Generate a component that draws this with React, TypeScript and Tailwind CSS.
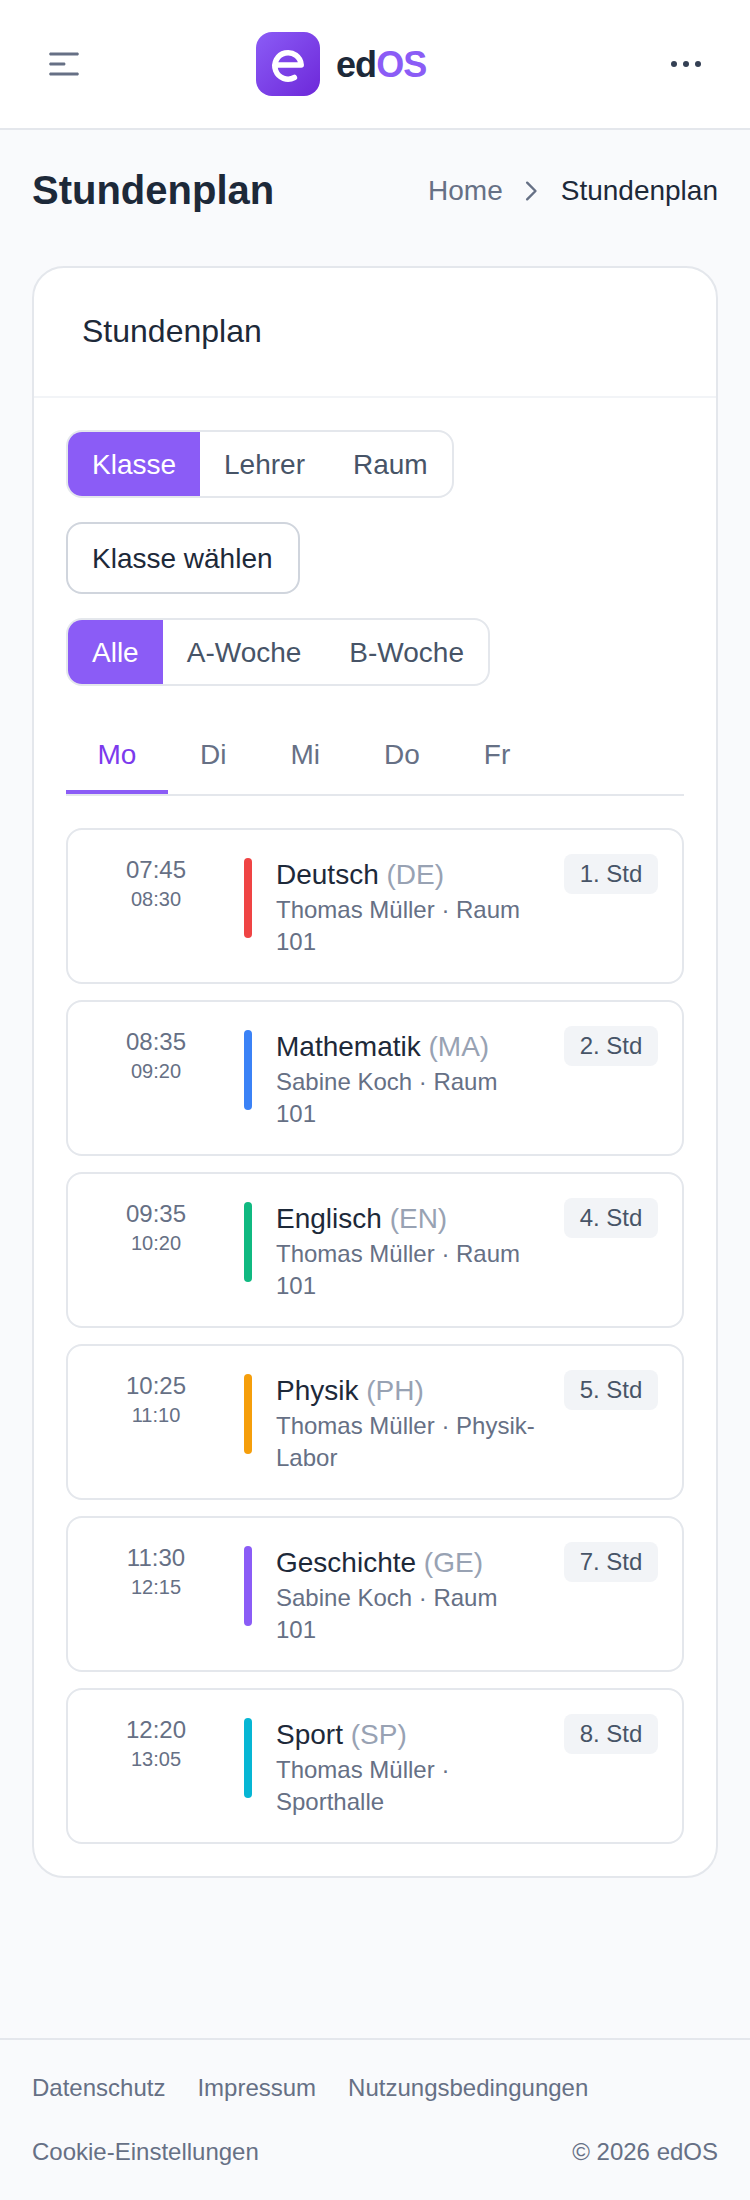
const lessons = [
  { start: "07:45", end: "08:30", bar: "bg-[#ef4444]", subject: "Deutsch", code: "DE", info: "Thomas Müller · Raum 101", period: 1 },
  { start: "08:35", end: "09:20", bar: "bg-[#3b82f6]", subject: "Mathematik", code: "MA", info: "Sabine Koch · Raum 101", period: 2 },
  { start: "09:35", end: "10:20", bar: "bg-[#10b981]", subject: "Englisch", code: "EN", info: "Thomas Müller · Raum 101", period: 4 },
  { start: "10:25", end: "11:10", bar: "bg-[#f59e0b]", subject: "Physik", code: "PH", info: "Thomas Müller · Physik-Labor", period: 5 },
  { start: "11:30", end: "12:15", bar: "bg-[#8b5cf6]", subject: "Geschichte", code: "GE", info: "Sabine Koch · Raum 101", period: 7 },
  { start: "12:20", end: "13:05", bar: "bg-[#06b6d4]", subject: "Sport", code: "SP", info: "Thomas Müller · Sporthalle", period: 8 },
];

function Segmented({ options }: { options: string[] }) {
  return (
    <div className="flex h-[68px] w-fit overflow-hidden rounded-2xl border-2 border-[#e4e7ec]">
      {options.map((option, i) => (
        <button
          key={option}
          className={
            i === 0
              ? "bg-[#8b5cf6] px-6 pt-px text-[28px] leading-[39px] text-white"
              : "px-6 pt-px text-[28px] leading-[39px] text-[#475467]"
          }
        >
          {option}
        </button>
      ))}
    </div>
  );
}

function Header() {
  return (
    <header className="flex h-[130px] items-center justify-between border-b-2 border-[#e4e7ec] bg-white px-6">
      <button className="flex size-20 items-center justify-center" aria-label="Menü">
        <svg width="32" height="24" viewBox="0 0 16 12" fill="none">
          <path
            fillRule="evenodd"
            clipRule="evenodd"
            d="M0.583252 1C0.583252 0.585788 0.919038 0.25 1.33325 0.25H14.6666C15.0808 0.25 15.4166 0.585786 15.4166 1C15.4166 1.41421 15.0808 1.75 14.6666 1.75L1.33325 1.75C0.919038 1.75 0.583252 1.41422 0.583252 1ZM0.583252 11C0.583252 10.5858 0.919038 10.25 1.33325 10.25L14.6666 10.25C15.0808 10.25 15.4166 10.5858 15.4166 11C15.4166 11.4142 15.0808 11.75 14.6666 11.75L1.33325 11.75C0.919038 11.75 0.583252 11.4142 0.583252 11ZM1.33325 5.25C0.919038 5.25 0.583252 5.58579 0.583252 6C0.583252 6.41421 0.919038 6.75 1.33325 6.75L7.99992 6.75C8.41413 6.75 8.74992 6.41421 8.74992 6C8.74992 5.58579 8.41413 5.25 7.99992 5.25L1.33325 5.25Z"
            fill="#667085"
          />
        </svg>
      </button>
      <div className="flex w-[238px] items-center gap-4">
        <svg className="shrink-0" width="64" height="64" viewBox="0 0 64 64" fill="none">
          <defs>
            <linearGradient id="logo" x1="0" y1="0" x2="64" y2="64" gradientUnits="userSpaceOnUse">
              <stop stopColor="#8b5cf6" />
              <stop offset="1" stopColor="#6d28d9" />
            </linearGradient>
          </defs>
          <rect width="64" height="64" rx="16" fill="url(#logo)" />
          <path
            d="M19 32.9H45.2A13.2 13.2 0 1 0 38.4 45.5"
            stroke="#fff"
            strokeWidth="5.5"
            strokeLinecap="round"
            strokeLinejoin="round"
          />
        </svg>
        <span className="pt-0.5 text-[36px] leading-[56px] font-bold tracking-[-0.025em] text-[#1d2939]">
          ed<span className="text-[#8b5cf6]">OS</span>
        </span>
      </div>
      <button className="flex size-20 items-center justify-center" aria-label="Mehr">
        <svg width="48" height="48" viewBox="0 0 24 24" fill="#344054">
          <circle cx="6" cy="12" r="1.5" />
          <circle cx="12" cy="12" r="1.5" />
          <circle cx="18" cy="12" r="1.5" />
        </svg>
      </button>
    </header>
  );
}

export default function App() {
  return (
    <div className="flex h-[2200px] w-[750px] flex-col bg-[#f9fafc] font-['Liberation_Sans',Arial,sans-serif]">
      <Header />
      <main className="flex-1 px-8 pt-8">
        <div className="mb-12 flex h-14 items-center justify-between">
          <h1 className="text-[40px] leading-[56px] font-bold text-[#1d2939]">Stundenplan</h1>
          <nav className="flex items-center gap-3 text-[28px] leading-[39px]">
            <a className="flex items-center gap-3 text-[#667085]">
              <span className="pt-px">Home</span>
              <svg width="34" height="32" viewBox="0 0 17 16" fill="none" stroke="#667085" strokeWidth="1.2">
                <path d="M6.0765 12.667L10.2432 8.50033L6.0765 4.33366" strokeLinecap="round" strokeLinejoin="round" />
              </svg>
            </a>
            <span className="pt-px text-[#1d2939]">Stundenplan</span>
          </nav>
        </div>

        <section className="rounded-[32px] border-2 border-[#e4e7ec] bg-white">
          <div className="border-b-2 border-[#f2f4f7] px-12 py-10">
            <h2 className="pb-0.5 text-[32px] leading-[46px] text-[#1d2939]">Stundenplan</h2>
          </div>
          <div className="p-8">
            <div className="flex flex-col items-start gap-6">
              <Segmented options={["Klasse", "Lehrer", "Raum"]} />
              <button className="h-[72px] w-[234px] rounded-2xl border-2 border-[#d0d5dd] px-6 pt-px text-left text-[28px] leading-[39px] whitespace-nowrap text-[#1d2939]">
                Klasse wählen
              </button>
              <Segmented options={["Alle", "A-Woche", "B-Woche"]} />
            </div>

            <div className="mt-8 mb-8 flex border-b-2 border-[#e4e7ec] text-[28px] leading-[39px] text-[#667085]">
              <button className="w-[102px] border-b-4 border-[#8b5cf6] pt-[17px] pb-4 text-[#7c3aed]">Mo</button>
              {["Di", "Mi", "Do", "Fr"].map((day) => (
                <button key={day} className="border-b-4 border-transparent px-8 pt-[17px] pb-4">
                  {day}
                </button>
              ))}
            </div>

            <ul className="flex flex-col gap-4">
              {lessons.map((l) => (
                <li key={l.start} className="flex items-start gap-6 rounded-2xl border-2 border-[#e4e7ec] p-6">
                  <div className="w-32 shrink-0 text-center text-[#667085]">
                    <div className="text-2xl leading-8">{l.start}</div>
                    <div className="text-xl leading-[26px]">{l.end}</div>
                  </div>
                  <div className={`mt-1 h-20 w-2 shrink-0 rounded-[4px] ${l.bar}`} />
                  <div className="min-w-0 flex-1">
                    <div className="pt-px text-[28px] leading-[39px] text-[#1d2939]">
                      {l.subject} <span className="text-[#98a2b3]">({l.code})</span>
                    </div>
                    <div className="text-2xl leading-8 text-[#667085]">{l.info}</div>
                  </div>
                  <span className="w-[94px] shrink-0 rounded-lg bg-[#f2f4f7] py-1 text-center text-2xl leading-8 whitespace-nowrap text-[#475467]">
                    {l.period}. Std
                  </span>
                </li>
              ))}
            </ul>
          </div>
        </section>
      </main>

      <footer className="flex flex-col gap-8 border-t-2 border-[#e4e7ec] p-8 text-2xl leading-8 text-[#667085]">
        <div className="flex gap-8">
          <a>Datenschutz</a>
          <a>Impressum</a>
          <a>Nutzungsbedingungen</a>
        </div>
        <div className="flex justify-between">
          <a>Cookie-Einstellungen</a>
          <span>© 2026 edOS</span>
        </div>
      </footer>
    </div>
  );
}
